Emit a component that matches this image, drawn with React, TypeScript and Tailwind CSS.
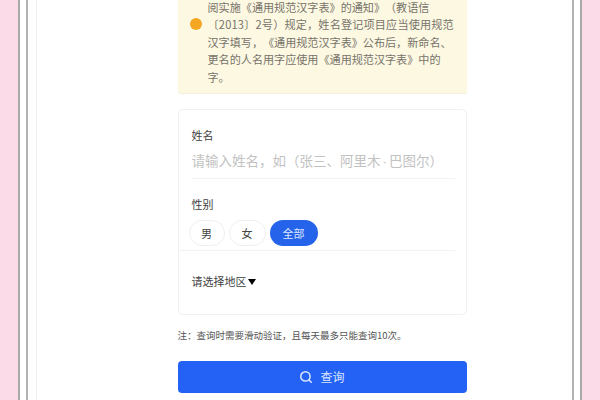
import React from 'react';
import { Search } from 'lucide-react';

const font = "font-['Noto_Sans_CJK_SC','Noto_Sans',sans-serif]";

const App: React.FC = () => {
  return (
    <div className={`${font} [text-spacing-trim:space-all] flex h-[400px] w-[600px] overflow-hidden bg-[#fbdbe8]`}>
      {/* frame lines */}
      <div className="ml-[18px] mr-[18px] flex h-full w-[564px] flex-none border-x-2 border-x-[#a9a9a9] bg-white px-[6px]">
        <div className="flex h-full flex-1 border-x-2 border-x-[#b3b3b3] bg-white pl-[8px]">
          <div className="flex h-full flex-1 flex-col items-center justify-end border-l border-l-[#eeeeee] pb-[7px] pl-[140px] pr-[105px]">
            {/* notice */}
            <div className="flex h-[150px] w-[289px] flex-none items-center justify-end rounded-b-[3px] bg-[#fcf8e2] pr-[13px] shadow-[0_1px_1px_#f3eed8]">
              <div className="relative flex h-full w-[246px] flex-col justify-end whitespace-nowrap pb-[7px] text-[11.1px] leading-[17.5px] text-[#77736a]">
                <span className="absolute left-[-18px] bottom-[63px] h-[12px] w-[12px] rounded-full bg-[#f5a623]" />
                <p>阅实施《通用规范汉字表》的通知》（教语信</p>
                <p className="tracking-[0.2px]">〔2013〕2号）规定，姓名登记项目应当使用规范</p>
                <p>汉字填写，《通用规范汉字表》公布后，新命名、</p>
                <p>更名的人名用字应使用《通用规范汉字表》中的</p>
                <p>字。</p>
              </div>
            </div>

            {/* form */}
            <div className="mt-[16px] h-[206px] w-[289px] flex-none rounded-[4px] border border-[#f1f1f1] bg-white">
              <div className="ml-[13px] mr-[11px] flex h-[69px] flex-col border-b border-b-[#f2f2f2] pt-[17px]">
                <label className="text-[11px] leading-[16px] text-[#3f3f3f]">姓名</label>
                <span className="mt-[8px] whitespace-nowrap text-[13.5px] leading-[18px] text-[#c2c2c2]">
                  请输入姓名，如（张三、阿里木<span className="px-[2px] font-['Liberation_Sans']">·</span>巴图尔）
                </span>
              </div>
              <div className="ml-[1px] mr-[11px] flex h-[72px] flex-col border-b border-b-[#f2f2f2] pl-[9px] pt-[17px]">
                <label className="ml-[3px] text-[11px] leading-[16px] text-[#3f3f3f]">性别</label>
                <div className="mt-[8px] flex gap-[4px]">
                  <button className="h-[26px] w-[36px] rounded-full border border-[#efefef] bg-white text-[11px] text-[#444]">男</button>
                  <button className="h-[26px] w-[37px] rounded-full border border-[#efefef] bg-white text-[11px] text-[#444]">女</button>
                  <button className="h-[26px] w-[48px] rounded-full bg-[#2563eb] text-[11px] text-[#dfe8fb]">全部</button>
                </div>
              </div>
              <div className="mx-[13px] mt-[22px] flex items-center text-[11px] leading-[16px] text-[#3f3f3f]">
                请选择地区
                <span className="ml-[1px] mt-[2px] h-0 w-0 border-x-[4px] border-t-[6px] border-x-transparent border-t-black" />
              </div>
            </div>

            <p className="mt-[12px] h-[16px] w-[289px] flex-none text-[9.5px] leading-[16px] text-[#555]">注：查询时需要滑动验证，且每天最多只能查询10次。</p>

            <button className="mt-[18px] flex h-[32px] w-[289px] flex-none items-center justify-center gap-[7px] rounded-[4px] bg-[#2462f6] text-[12px] text-[#dbe6fd]">
              <Search size={14} strokeWidth={2.6} />
              查询
            </button>
          </div>
        </div>
      </div>
    </div>
  );
};

export default App;
